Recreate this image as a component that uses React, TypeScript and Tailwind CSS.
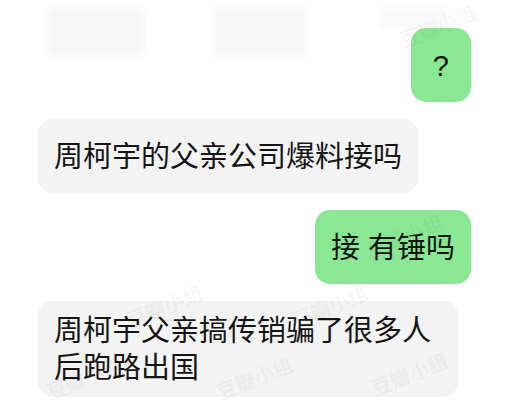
import React from 'react';

type Msg = { text: string; mine: boolean; className?: string };

const messages: Msg[] = [
  { text: '?', mine: true, className: 'px-[22px]' },
  { text: '周柯宇的父亲公司爆料接吗', mine: false },
  { text: '接 有锤吗', mine: true },
  { text: '周柯宇父亲搞传销骗了很多人后跑路出国', mine: false },
];

// faint "豆瓣小组" watermarks sitting on top of the chat
const marks = [
  { left: 'left-[398px]', top: 'top-[12px]' },
  { left: 'left-[365px]', top: 'top-[222px]' },
  { left: 'left-[125px]', top: 'top-[292px]' },
  { left: 'left-[290px]', top: 'top-[292px]' },
  { left: 'left-[45px]', top: 'top-[364px]' },
  { left: 'left-[215px]', top: 'top-[364px]' },
  { left: 'left-[370px]', top: 'top-[360px]' },
];

const Bubble: React.FC<{ msg: Msg }> = ({ msg }) => (
  <div className={`flex ${msg.mine ? 'justify-end' : 'justify-start'}`}>
    <div
      className={`flex min-h-[74px] max-w-[420px] items-center rounded-[15px] pb-[10px] pt-[12px] text-[29px] leading-[37px] text-[#151515] ${
        msg.mine ? 'bg-[#8ae894]' : 'bg-[#f3f3f3]'
      } ${msg.className ?? 'px-[16px]'}`}
    >
      <p>{msg.text}</p>
    </div>
  </div>
);

export default function App() {
  return (
    <div
      className="relative h-[411px] w-[527px] overflow-hidden bg-white"
      style={{ fontFamily: '"Liberation Sans", "Noto Sans CJK SC", sans-serif' }}
    >
      {/* blurred mosaic at the top */}
      <div className="flex gap-[70px] pl-[48px] pt-[8px] blur-[3px]">
        <div className="h-[48px] w-[95px] bg-[#f7f7f7]" />
        <div className="h-[48px] w-[95px] bg-[#f8f8f8]" />
        <div className="h-[22px] w-[70px] bg-[#fafafa]" />
      </div>

      <div className="absolute inset-x-0 top-[28px] flex flex-col gap-[17px] pl-[38px] pr-[56px]">
        {messages.map((m, i) => (
          <Bubble key={i} msg={m} />
        ))}
      </div>

      {marks.map((m, i) => (
        <span
          key={i}
          className={`pointer-events-none absolute ${m.left} ${m.top} -rotate-[22deg] text-[20px] font-bold text-black/[0.05]`}
        >
          豆瓣小组
        </span>
      ))}
    </div>
  );
}
